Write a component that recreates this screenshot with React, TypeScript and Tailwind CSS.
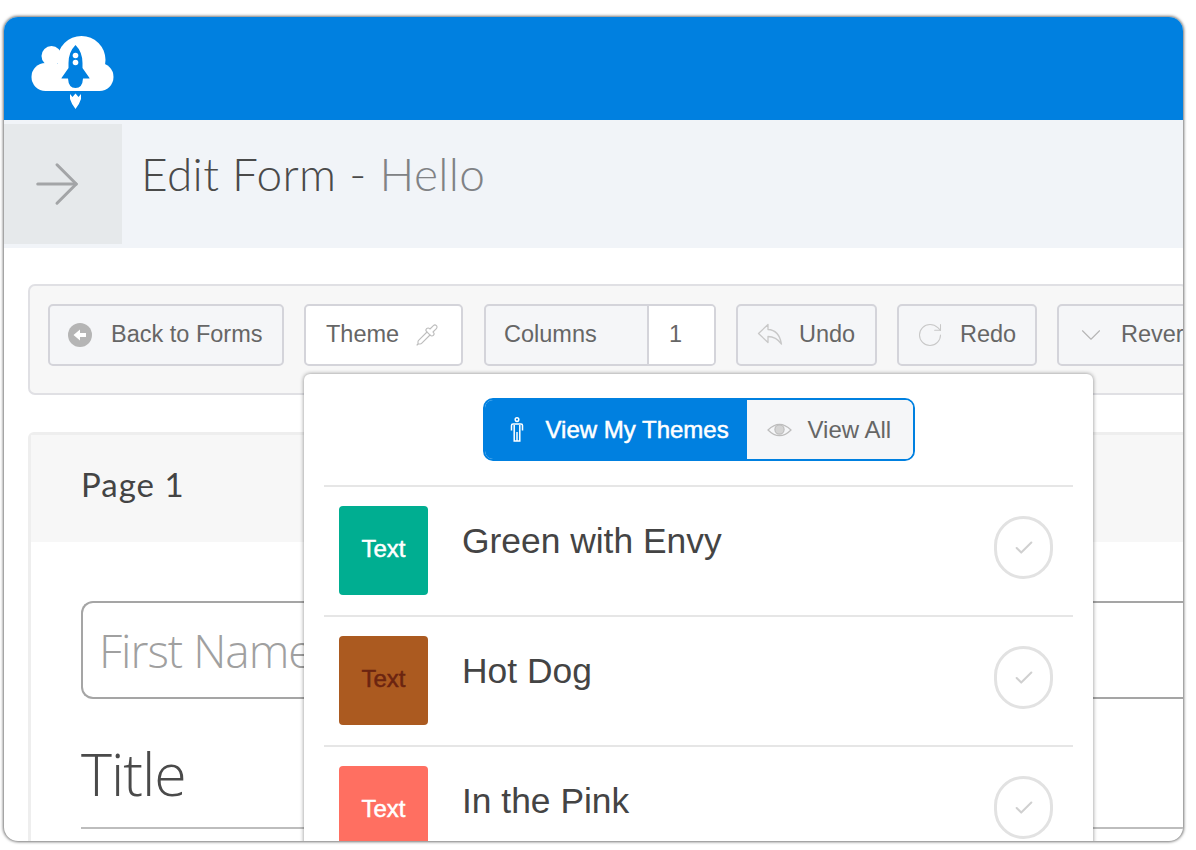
import { ArrowRight, Check, ChevronDown, Pipette, RotateCw } from "lucide-react";

const THEMES = [
  { name: "Green with Envy", swatch: "bg-[#00ae91]", text: "text-white" },
  { name: "Hot Dog", swatch: "bg-[#ab5a20]", text: "text-[#6b2410]" },
  { name: "In the Pink", swatch: "bg-[#ff6f61]", text: "text-white" },
];

const btn =
  "h-[62px] flex items-center rounded-[5px] border-2 border-[#d4d4da] bg-[#f5f6f8] text-[23.5px] text-[#666] flex-shrink-0 whitespace-nowrap";

function Logo() {
  return (
    <svg width="85" height="74" viewBox="0 0 84 74" className="block">
      <g fill="#fff">
        <circle cx="21" cy="20" r="10" />
        <circle cx="51" cy="24" r="24" />
        <circle cx="15" cy="41" r="14" />
        <circle cx="69" cy="41" r="14" />
        <rect x="15" y="28" width="54" height="27" />
        <path d="M39.5 58 L42 61 L45 57.5 L48 61 L50.5 58 L50.5 63 Q49 68 45 73 Q41 68 39.5 63 Z" />
      </g>
      <path
        d="M45 9 Q52 16 52 27 L52 32 L59 42 L59 42.5 L52.5 42.5 Q52 52 45 52 Q38 52 37.5 42.5 L31 42.5 L31 42 L38 32 L38 27 Q38 16 45 9 Z"
        fill="#0080e0"
      />
      <circle cx="45" cy="19.5" r="2.8" fill="#fff" />
      <circle cx="45" cy="26.5" r="2.8" fill="#fff" />
    </svg>
  );
}

function BackIcon() {
  return (
    <svg width="24" height="24" viewBox="0 0 24 24">
      <circle cx="12" cy="12" r="12" fill="#b5b5b5" />
      <path d="M5.5 12 L12 6.5 V10 H18 V14 H12 V17.5 Z" fill="#fff" />
    </svg>
  );
}

function UndoIcon() {
  return (
    <svg width="26" height="24" viewBox="0 0 26 24" fill="none" stroke="#c8c8c8" strokeWidth="1.3" strokeLinejoin="round">
      <path d="M1.5 10.5 L11 1.5 V6.5 Q22 7 24.5 21 Q19 13.5 11 13.5 V19.5 Z" />
    </svg>
  );
}

function PersonIcon() {
  return (
    <svg width="14" height="25" viewBox="0 0 14 25" fill="none" stroke="#fff" strokeWidth="1.5">
      <circle cx="7" cy="2.6" r="1.8" />
      <path d="M1.5 13.5 V8.5 Q1.5 7 3 7 H11 Q12.5 7 12.5 8.5 V13.5 M4.2 8 V24 H9.8 V8 M7 15 V24" />
    </svg>
  );
}

function EyeIcon() {
  return (
    <svg width="25" height="16" viewBox="0 0 25 16" fill="none" stroke="#bdbdbd" strokeWidth="1.2">
      <path d="M1 8 Q12.5 -3.5 24 8 Q12.5 19.5 1 8 Z" />
      <circle cx="12.5" cy="7.5" r="4.6" fill="#d4d4d4" />
    </svg>
  );
}

function ThemeRow({ name, swatch, text }: { name: string; swatch: string; text: string }) {
  return (
    <div className="h-[130px] border-t-2 border-[#e6e6e6] pt-[19px] pl-[15px] pr-[20px] flex items-start">
      <div className={`w-[89px] h-[89px] rounded-[4px] flex items-center justify-center pb-[4px] text-[24px] [-webkit-text-stroke:0.5px_currentColor] ${swatch} ${text}`}>
        Text
      </div>
      <div className="ml-[34px] mt-[10px] text-[35.4px] leading-[50px] text-[#444] flex-1">{name}</div>
      <div className="mt-[10px] w-[59px] h-[63px] rounded-full border-[3px] border-[#e2e2e2] flex items-center justify-center">
        <Check className="w-[22px] h-[22px] text-[#d0d0d0]" strokeWidth={2.2} />
      </div>
    </div>
  );
}

export default function App() {
  return (
    <div className="w-[1196px] h-[850px] bg-white pt-[17px] pl-[4px] font-['Liberation_Sans',Arial,sans-serif] overflow-hidden">
      <div className="relative w-[1179px] h-[824px] rounded-[14px] overflow-hidden bg-white shadow-[0_0_3px_1px_rgba(0,0,0,0.55)]">
        {/* Top bar */}
        <div className="h-[103px] bg-[#0080e0] pl-[26px] pt-[19px]">
          <Logo />
        </div>

        {/* Title */}
        <div className="h-[128px] bg-[#f1f4f8] pt-[4px] flex items-start">
          <div className="w-[118px] h-[120px] bg-[#e6e9eb] flex items-center justify-center pr-[12px]">
            <ArrowRight className="w-[66px] h-[66px] text-[#a3a5a7]" strokeWidth={1.1} />
          </div>
          <h1 className="ml-[19px] mt-[18px] text-[46px] leading-[64px] tracking-[0.35px] font-light font-['Lato',sans-serif] text-[#4a4a4a]">
            Edit Form - <span className="text-[#808285]">Hello</span>
          </h1>
        </div>

        {/* Toolbar */}
        <div className="mt-[36px] ml-[24px] h-[111px] w-[1160px] rounded-[7px] border-2 border-[#e0e0e4] bg-[#f7f7f7] pl-[18px] pt-[18px] flex items-start gap-[20px]">
          <div className={`${btn} w-[236px] pl-[18px]`}>
            <BackIcon />
            <span className="ml-[19px]">Back to Forms</span>
          </div>
          <div className={`${btn} w-[159px] bg-white pl-[20px]`}>
            <span>Theme</span>
            <Pipette className="ml-[16px] w-[24px] h-[24px] text-[#bdbdbd]" strokeWidth={1.1} />
          </div>
          <div className={`${btn} w-[232px] ml-[1px] overflow-hidden`}>
            <span className="pl-[18px] w-[161px]">Columns</span>
            <span className="flex-1 h-full bg-white border-l-2 border-[#d4d4da] flex items-center pl-[20px]">1</span>
          </div>
          <div className={`${btn} w-[141px] pl-[19px]`}>
            <UndoIcon />
            <span className="ml-[16px]">Undo</span>
          </div>
          <div className={`${btn} w-[140px] pl-[17px]`}>
            <RotateCw className="w-[28px] h-[28px] text-[#c8c8c8]" strokeWidth={0.9} />
            <span className="ml-[16px]">Redo</span>
          </div>
          <div className={`${btn} w-[180px] pl-[15px]`}>
            <ChevronDown className="w-[34px] h-[34px] text-[#b5b5b5]" strokeWidth={0.8} />
            <span className="ml-[13px]">Revert</span>
          </div>
        </div>

        {/* Page card */}
        <div className="mt-[37px] ml-[24px] w-[1160px] h-[420px] rounded-t-[6px] border-[3px] border-b-0 border-[#eeeeee]">
          <div className="h-[107px] bg-[#f7f7f7] pl-[50px] pt-[27px] text-[33px] leading-[44px] tracking-[1px] font-['Lato',sans-serif] text-[#444]">
            Page 1
          </div>
          <div className="pl-[50px] pt-[59px]">
            <div className="h-[98px] rounded-l-[12px] border-2 border-r-0 border-[#a5a5a5] pl-[16px] flex items-center text-[46px] font-light font-['Open_Sans',sans-serif] text-[#a0a0a0] tracking-[-1px]">
              First Name
            </div>
            <div className="mt-[37px] text-[59px] leading-[74px] font-light font-['Open_Sans',sans-serif] text-[#4a4a4a] tracking-[-1px]">
              Title
            </div>
            <div className="mt-[17px] border-t-2 border-[#bdbdbd]" />
          </div>
        </div>

        {/* Theme dropdown */}
        <div className="absolute left-[300px] top-[357px] w-[789px] h-[480px] rounded-[6px] bg-white shadow-[0_0_4px_rgba(0,0,0,0.45)] pt-[24px] px-[20px]">
          <div className="flex justify-center h-[63px] mb-[24px]">
            <div className="w-[432px] flex rounded-[10px] border-2 border-[#0080e0] overflow-hidden text-[24px]">
              <div className="w-[262px] bg-[#0080e0] text-white flex items-center pl-[25px]">
                <PersonIcon />
                <span className="ml-[22px] whitespace-nowrap [-webkit-text-stroke:0.5px_white]">View My Themes</span>
              </div>
              <div className="flex-1 bg-[#f5f6f8] text-[#666] flex items-center pl-[20px]">
                <EyeIcon />
                <span className="ml-[16px] whitespace-nowrap">View All</span>
              </div>
            </div>
          </div>
          {THEMES.map((t) => (
            <ThemeRow key={t.name} {...t} />
          ))}
        </div>
      </div>
    </div>
  );
}
